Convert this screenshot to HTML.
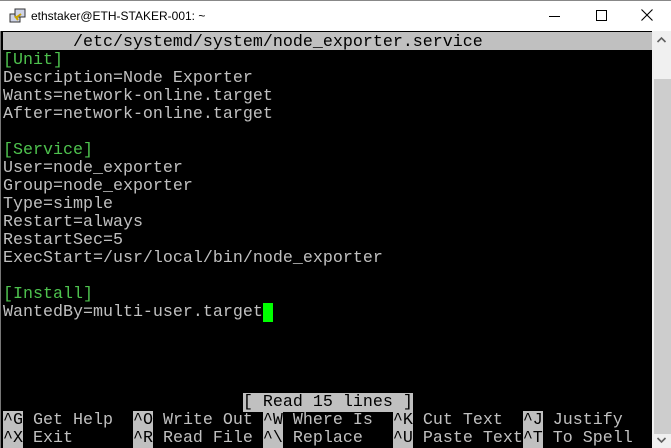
<!DOCTYPE html>
<html><head><style>
body{margin:0;width:671px;height:448px;overflow:hidden;background:#fff;position:relative;font-family:"Liberation Sans",sans-serif}
.tb{position:absolute;left:0;top:0;width:671px;height:31px;background:#fff;border-top:1px solid #888;box-sizing:border-box}
.tt{position:absolute;left:31px;top:8px;font-size:12px;color:#000}
.term{position:absolute;left:0;top:31px;width:652px;height:417px;background:#000;border-left:1px solid #777;box-sizing:border-box}
.r{position:absolute;left:2px;height:18px;line-height:18px;font-family:"Liberation Mono",monospace;font-size:16.67px;color:#c0c0c0;white-space:pre}
.g{color:#4ec24e}
.k{background:#c0c0c0;color:#000}
.sb{position:absolute;left:652px;top:31px;width:19px;height:417px;background:#f0f0f0}
.th{position:absolute;left:654px;top:79px;width:17px;height:355px;background:#cdcdcd}
</style></head><body>
<div class="tb">
<svg style="position:absolute;left:9px;top:6px" width="18" height="18" viewBox="0 0 18 18"><rect x="1" y="7" width="10" height="8" fill="#cfd4e8" stroke="#333"/><rect x="6" y="2" width="10" height="8" fill="#cfd4e8" stroke="#333"/><path d="M8 10l4-3M6 9l3 4" stroke="#c9a200" stroke-width="2"/></svg>
<div class="tt">ethstaker@ETH-STAKER-001: ~</div>
<div style="position:absolute;left:549px;top:15px;width:11px;height:1px;background:#000"></div>
<div style="position:absolute;left:596px;top:9px;width:9px;height:9px;border:1px solid #000"></div>
<svg style="position:absolute;left:641px;top:8px" width="12" height="12"><path d="M0.5 0.5L11.5 11.5M11.5 0.5L0.5 11.5" stroke="#000" stroke-width="1.1"/></svg>
</div>
<div class="term">
<div style="position:absolute;left:2px;top:1px;width:650px;height:18px;background:#c0c0c0"></div>
<div class="r" style="top:3px;color:#000">       /etc/systemd/system/node_exporter.service</div>
<div class="r g" style="top:21px">[Unit]</div>
<div class="r" style="top:39px">Description=Node Exporter</div>
<div class="r" style="top:57px">Wants=network-online.target</div>
<div class="r" style="top:75px">After=network-online.target</div>
<div class="r g" style="top:111px">[Service]</div>
<div class="r" style="top:129px">User=node_exporter</div>
<div class="r" style="top:147px">Group=node_exporter</div>
<div class="r" style="top:165px">Type=simple</div>
<div class="r" style="top:183px">Restart=always</div>
<div class="r" style="top:201px">RestartSec=5</div>
<div class="r" style="top:219px">ExecStart=/usr/local/bin/node_exporter</div>
<div class="r g" style="top:255px">[Install]</div>
<div class="r" style="top:273px">WantedBy=multi-user.target<span style="background:#00ff00">&nbsp;</span></div>
<div class="r" style="top:363px">                        <span class="k">[ Read 15 lines ]</span></div>
<div class="r" style="top:381px"><span class="k">^G</span> Get Help  <span class="k">^O</span> Write Out <span class="k">^W</span> Where Is  <span class="k">^K</span> Cut Text  <span class="k">^J</span> Justify</div>
<div class="r" style="top:399px"><span class="k">^X</span> Exit      <span class="k">^R</span> Read File <span class="k">^\</span> Replace   <span class="k">^U</span> Paste Text<span class="k">^T</span> To Spell</div>
</div>
<div class="sb"></div>
<div class="th"></div>
<svg style="position:absolute;left:656px;top:36px" width="11" height="8"><path d="M1.5 6L5.5 2L9.5 6" stroke="#606060" stroke-width="1.6" fill="none"/></svg>
<svg style="position:absolute;left:656px;top:436px" width="11" height="8"><path d="M1.5 2L5.5 6L9.5 2" stroke="#606060" stroke-width="1.6" fill="none"/></svg>
</body></html>
